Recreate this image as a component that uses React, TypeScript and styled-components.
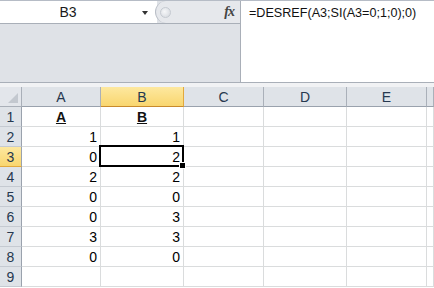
import React from "react";
import styled, { createGlobalStyle } from "styled-components";

const Global = createGlobalStyle`
  html, body { margin: 0; padding: 0; background: #fff; }
  body { width: 434px; height: 288px; overflow: hidden; font-family: "Liberation Sans", Arial, sans-serif; }
`;

const Page = styled.div`
  width: 434px;
  height: 288px;
  display: flex;
  flex-direction: column;
  overflow: hidden;
`;

const FormulaArea = styled.div`
  height: 83px;
  display: flex;
  background: #dfe2e7;
  border-top: 1px solid #b6bcc6;
  border-bottom: 1px solid #a9afb8;
  box-sizing: border-box;
`;

const LeftPane = styled.div`
  width: 240px;
  display: flex;
  flex-direction: column;
  border-right: 1px solid #a9afb8;
`;

const NameRow = styled.div`
  height: 22px;
  display: flex;
  border-bottom: 1px solid #a9afb8;
`;

const NameBox = styled.div`
  width: 157px;
  background: #fff;
  display: flex;
  align-items: center;
  font-size: 14px;
  color: #1a1a1a;
`;

const NameText = styled.span`
  width: 136px;
  text-align: center;
`;

const Arrow = styled.span`
  width: 0;
  height: 0;
  border-left: 3.5px solid transparent;
  border-right: 3.5px solid transparent;
  border-top: 4px solid #333;
  margin-left: 6px;
  margin-top: 1px;
`;

const FxBox = styled.div`
  flex: 1;
  display: flex;
  align-items: center;
  justify-content: space-between;
  background: #e6e8ec;
  border-left: 1px solid #b9bec6;
  border-radius: 11px 0 0 11px;
  margin-left: -2px;
  padding: 0 6px 0 4px;
`;

const Knob = styled.span`
  width: 9px;
  height: 9px;
  border-radius: 50%;
  background: radial-gradient(circle at 40% 40%, #f6f7f9 0%, #d2d6dc 100%);
  border: 1px solid #c5cad1;
`;

const Fx = styled.span`
  font-family: "Liberation Serif", "Times New Roman", serif;
  font-style: italic;
  font-weight: bold;
  font-size: 14px;
  color: #444;
  letter-spacing: -1px;
`;

const FormulaInput = styled.div`
  flex: 1;
  background: #fff;
  padding: 5px 0 0 8px;
  font-size: 12.6px;
  color: #111;
`;

const Gap = styled.div`
  height: 4px;
  background: #f1f2f4;
`;

const Sheet = styled.div`
  display: grid;
  grid-template-columns: 22px 79px 83px 80px 83px 80px 1fr;
  grid-auto-rows: 20px;
`;

const Corner = styled.div`
  background: #e3e6eb;
  border-right: 1px solid #a9afb8;
  border-bottom: 1px solid #a9afb8;
  position: relative;
  &::after {
    content: "";
    position: absolute;
    right: 3px;
    bottom: 3px;
    width: 0;
    height: 0;
    border-left: 10px solid transparent;
    border-bottom: 10px solid #c3c8cf;
  }
`;

const ColHead = styled.div<{ $active?: boolean }>`
  display: flex;
  align-items: center;
  justify-content: center;
  font-size: 14px;
  color: #26384f;
  background: ${(p) => (p.$active ? "linear-gradient(#fde89f, #f9d66f)" : "#dfe3e8")};
  border-right: 1px solid ${(p) => (p.$active ? "#e2a93d" : "#aab0b9")};
  border-bottom: 1px solid ${(p) => (p.$active ? "#c88a2c" : "#9aa2ad")};
`;

const RowHead = styled.div<{ $active?: boolean }>`
  display: flex;
  align-items: center;
  justify-content: center;
  font-size: 14px;
  color: #26384f;
  background: ${(p) => (p.$active ? "linear-gradient(#fde89f, #f9d66f)" : "#dfe3e8")};
  border-right: 1px solid #9aa2ad;
  border-bottom: 1px solid ${(p) => (p.$active ? "#e2a93d" : "#c5cad1")};
`;

const Cell = styled.div<{ $align?: string }>`
  display: flex;
  align-items: center;
  justify-content: ${(p) => p.$align || "flex-end"};
  padding: 0 3px;
  font-size: 14px;
  color: #000;
  background: #fff;
  border-right: 1px solid #dadcdd;
  border-bottom: 1px solid #dadcdd;
  position: relative;
`;

const Selection = styled.div`
  position: absolute;
  left: -2px;
  top: -2px;
  right: -1px;
  bottom: -1px;
  border: 2px solid #000;
  pointer-events: none;
  z-index: 2;
`;

const Handle = styled.div`
  position: absolute;
  right: -4px;
  bottom: -4px;
  width: 5px;
  height: 5px;
  background: #000;
  border: 1px solid #fff;
`;

const Label = styled.span`
  font-weight: bold;
  text-decoration: underline;
  color: #111;
`;

const cols = ["A", "B", "C", "D", "E", ""];
const data: (number | string | null)[][] = [
  ["A", "B"],
  [1, 1],
  [0, 2],
  [2, 2],
  [0, 0],
  [0, 3],
  [3, 3],
  [0, 0],
  [null, null],
];

export default function App() {
  return (
    <Page>
      <Global />
      <FormulaArea>
        <LeftPane>
          <NameRow>
            <NameBox>
              <NameText>B3</NameText>
              <Arrow />
            </NameBox>
            <FxBox>
              <Knob />
              <Fx>fx</Fx>
            </FxBox>
          </NameRow>
        </LeftPane>
        <FormulaInput>=DESREF(A3;SI(A3=0;1;0);0)</FormulaInput>
      </FormulaArea>
      <Gap />
      <Sheet>
        <Corner />
        {cols.map((c, i) => (
          <ColHead key={i} $active={c === "B"}>
            {c}
          </ColHead>
        ))}
        {data.map((row, r) => (
          <React.Fragment key={r}>
            <RowHead $active={r === 2}>{r + 1}</RowHead>
            {cols.map((_, ci) => {
              const v = ci < 2 ? row[ci] : null;
              const isHeader = r === 0 && ci < 2;
              const selected = r === 2 && ci === 1;
              return (
                <Cell key={ci} $align={isHeader ? "center" : "flex-end"}>
                  {isHeader ? <Label>{v}</Label> : v}
                  {selected && (
                    <Selection>
                      <Handle />
                    </Selection>
                  )}
                </Cell>
              );
            })}
          </React.Fragment>
        ))}
      </Sheet>
    </Page>
  );
}
